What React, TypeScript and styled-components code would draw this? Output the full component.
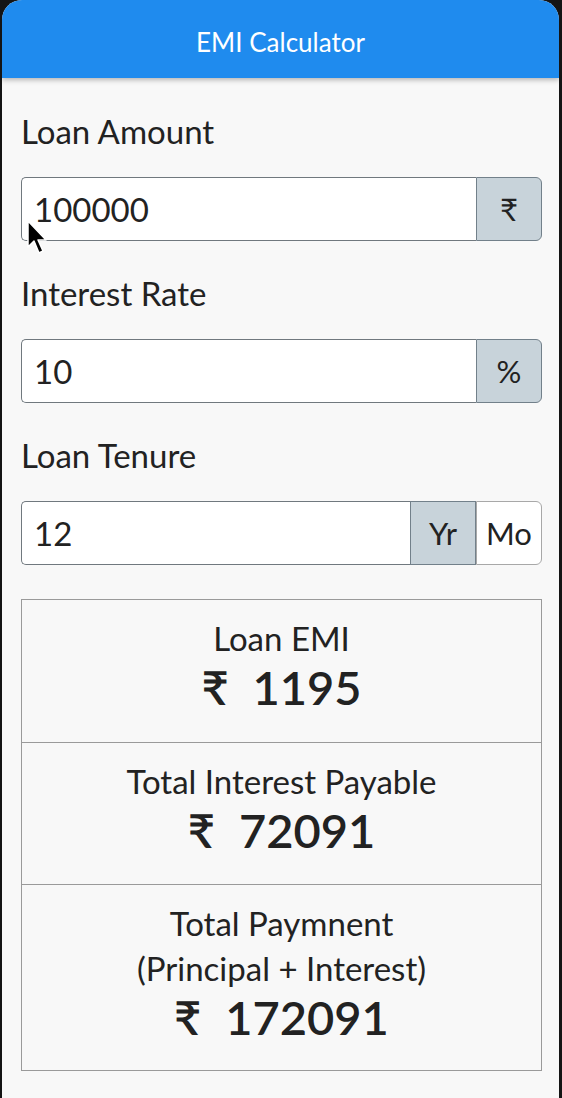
import React from "react";
import styled, { createGlobalStyle } from "styled-components";

const Global = createGlobalStyle`
  html, body { margin: 0; padding: 0; background: #141414; }
  body { font-family: Lato, "Noto Sans", "DejaVu Sans", sans-serif; }
  * { box-sizing: border-box; }
`;

const Phone = styled.div`
  position: relative;
  margin-left: 2px;
  width: 557px;
  height: 1146px;
  border-radius: 20px 20px 48px 48px;
  overflow: hidden;
  background: #f8f8f8;
`;

const Header = styled.header`
  height: 78px;
  background: #1f8bee;
  box-shadow: 0 2px 5px rgba(0, 0, 0, 0.28);
  display: flex;
  align-items: center;
  justify-content: center;
  padding-top: 6px;
  position: relative;
  z-index: 1;
`;

const Title = styled.h1`
  margin: 0;
  color: #ffffff;
  font-size: 26px;
  font-weight: 400;
`;

const Content = styled.main`
  padding: 33px 17px 0 19px;
  display: flex;
  flex-direction: column;
`;

const Field = styled.section`
  display: flex;
  flex-direction: column;
  margin-bottom: 32px;
`;

const Label = styled.label`
  font-size: 33px;
  line-height: 40px;
  color: #222;
  margin-bottom: 26px;
`;

const InputRow = styled.div`
  display: flex;
  height: 64px;
`;

const Input = styled.div`
  flex: 1;
  background: #fff;
  border: 1.5px solid #70787e;
  border-right: none;
  border-radius: 5px 0 0 5px;
  display: flex;
  align-items: center;
  padding-left: 12px;
  font-size: 33px;
  color: #222;
`;

const Addon = styled.div<{ $active?: boolean; $last?: boolean }>`
  width: 66px;
  display: flex;
  align-items: center;
  justify-content: center;
  font-size: 31px;
  color: #222;
  background: ${(p) => (p.$active ? "#c8d3da" : "#ffffff")};
  border: 1.5px solid ${(p) => (p.$active ? "#72808a" : "#a8a8a8")};
  border-radius: ${(p) => (p.$last ? "0 6px 6px 0" : "0")};
`;

const Results = styled.section`
  margin-top: 2px;
  border: 1.5px solid #9a9a9a;
  display: flex;
  flex-direction: column;
`;

const ResultRow = styled.div<{ $tall?: boolean }>`
  display: flex;
  flex-direction: column;
  align-items: center;
  padding: 16px 0 0;
  height: ${(p) => (p.$tall ? "186px" : "142px")};
  & + & {
    border-top: 1.5px solid #9a9a9a;
  }
`;

const ResultLabel = styled.div`
  font-size: 33px;
  line-height: 45px;
  color: #222;
  text-align: center;
`;

const ResultValue = styled.div`
  font-size: 47px;
  line-height: 52px;
  font-weight: 600;
  color: #222;
  display: flex;
  gap: 24px;
`;

const Cursor = styled.svg`
  position: absolute;
  left: 24px;
  top: 219px;
  z-index: 2;
`;

const rows = [
  { label: ["Loan EMI"], value: "1195" },
  { label: ["Total Interest Payable"], value: "72091" },
  { label: ["Total Paymnent", "(Principal + Interest)"], value: "172091" },
];

export default function App() {
  return (
    <>
      <Global />
      <Phone>
        <Header>
          <Title>EMI Calculator</Title>
        </Header>
        <Content>
          <Field>
            <Label>Loan Amount</Label>
            <InputRow>
              <Input>100000</Input>
              <Addon $active $last>₹</Addon>
            </InputRow>
          </Field>
          <Field>
            <Label>Interest Rate</Label>
            <InputRow>
              <Input>10</Input>
              <Addon $active $last>%</Addon>
            </InputRow>
          </Field>
          <Field>
            <Label>Loan Tenure</Label>
            <InputRow>
              <Input>12</Input>
              <Addon $active>Yr</Addon>
              <Addon $last>Mo</Addon>
            </InputRow>
          </Field>
          <Results>
            {rows.map((r) => (
              <ResultRow key={r.value} $tall={r.label.length > 1}>
                {r.label.map((l) => (
                  <ResultLabel key={l}>{l}</ResultLabel>
                ))}
                <ResultValue>
                  <span>₹</span>
                  <span>{r.value}</span>
                </ResultValue>
              </ResultRow>
            ))}
          </Results>
        </Content>
        <Cursor width="24" height="38" viewBox="0 0 24 38">
          <path d="M2 2 L2 28 L8 22 L13 34 L17 32 L12 21 L20 21 Z" fill="#000" stroke="#fff" strokeWidth="1.5" strokeLinejoin="round" />
        </Cursor>
      </Phone>
    </>
  );
}
